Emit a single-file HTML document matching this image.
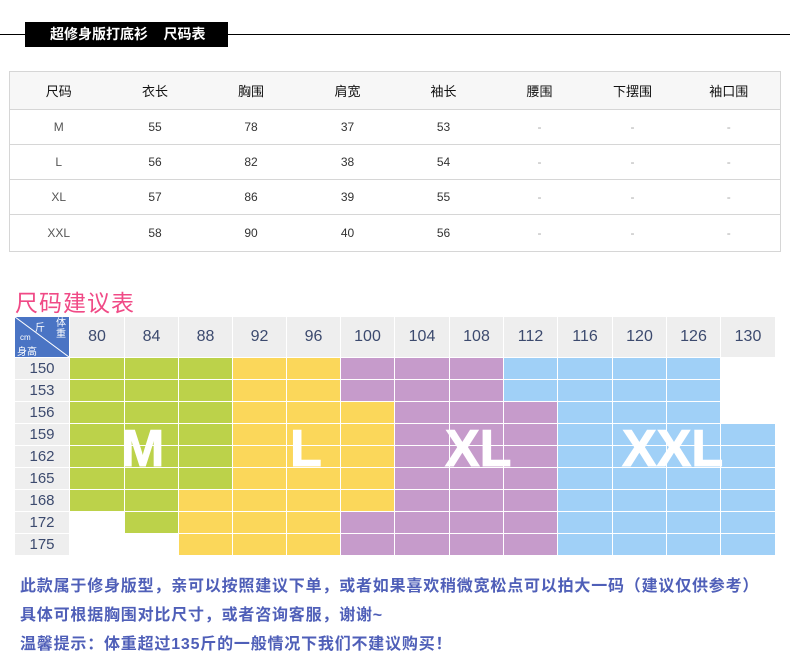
<!DOCTYPE html>
<html><head><meta charset="utf-8"><style>
*{margin:0;padding:0;box-sizing:border-box}
body{width:790px;height:670px;background:#fff;position:relative;overflow:hidden;font-family:"Liberation Sans","Noto Sans CJK SC",sans-serif}
.a{position:absolute}
.t{table-layout:fixed}
.t td{border-bottom:1px solid #d6d6d6;text-align:center;font-size:12px;color:#333}
.t tr:first-child td{font-size:13px;color:#111}
.hd{position:absolute;top:317px;height:40px;background:#eee;color:#3c4a6e;font-size:16px;text-align:center;line-height:40px}
.rl{position:absolute;left:15px;width:54px;height:21px;background:#eee;color:#3c4a6e;font-size:15px;text-align:center;line-height:21px}
.big{position:absolute;color:#fff;font-weight:bold;font-size:52px;font-family:"Liberation Sans",sans-serif;line-height:50px;-webkit-text-stroke:1px #fff}
.n{position:absolute;left:20px;color:#4f5fb8;font-weight:bold;font-size:16px;letter-spacing:0.8px;white-space:nowrap}
</style></head><body>
<div class="a" style="left:0;top:34px;width:790px;height:1px;background:#000"></div>
<div class="a" style="left:25px;top:22px;width:203px;height:25px;background:#000;color:#fff;font-size:14px;line-height:25px;padding-left:25px;font-weight:bold">超修身版打底衫&nbsp;&nbsp;&nbsp;&nbsp;尺码表</div>
<table class="a t" style="left:9px;top:71px;width:771px;border:1px solid #d6d6d6;border-collapse:collapse">
<colgroup><col style="width:98px"><col style="width:95px"><col style="width:97px"><col style="width:96px"><col style="width:96px"><col style="width:96px"><col style="width:90px"><col style="width:103px"></colgroup>
<tr style="height:38px;background:#f7f7f7"><td>尺码</td><td>衣长</td><td>胸围</td><td>肩宽</td><td>袖长</td><td>腰围</td><td>下摆围</td><td>袖口围</td></tr>
<tr style="height:35px"><td style="color:#555">M</td><td>55</td><td>78</td><td>37</td><td>53</td><td style="color:#aaa">-</td><td style="color:#aaa">-</td><td style="color:#aaa">-</td></tr>
<tr style="height:35px"><td style="color:#555">L</td><td>56</td><td>82</td><td>38</td><td>54</td><td style="color:#aaa">-</td><td style="color:#aaa">-</td><td style="color:#aaa">-</td></tr>
<tr style="height:35px"><td style="color:#555">XL</td><td>57</td><td>86</td><td>39</td><td>55</td><td style="color:#aaa">-</td><td style="color:#aaa">-</td><td style="color:#aaa">-</td></tr>
<tr style="height:37px"><td style="color:#555">XXL</td><td>58</td><td>90</td><td>40</td><td>56</td><td style="color:#aaa">-</td><td style="color:#aaa">-</td><td style="color:#aaa">-</td></tr>
</table>
<div class="a" style="left:15px;top:284px;font-size:23px;color:#f04a86;letter-spacing:1px">尺码建议表</div>
<div class="a" style="left:15px;top:317px;width:54px;height:40px;background:#4a74c4;overflow:hidden">
<svg width="54" height="40" style="position:absolute;left:0;top:0"><line x1="0" y1="0" x2="54" y2="40" stroke="#fff" stroke-width="1"/></svg>
<span class="a" style="left:20px;top:2px;color:#fff;font-size:10px">斤</span>
<span class="a" style="left:41px;top:1px;color:#fff;font-size:10px;line-height:11px">体<br>重</span>
<span class="a" style="left:5px;top:16px;color:#fff;font-size:8px">cm</span>
<span class="a" style="left:2px;top:26px;color:#fff;font-size:10px">身高</span>
</div>
<div id="grid"></div>
<script>
var xs=[70,125,179,233,287,341,395,450,504,558,613,667,721,776];
var ws=["80","84","88","92","96","100","104","108","112","116","120","126","130"];
var hs=["150","153","156","159","162","165","168","172","175"];
var C={G:"#bcd24a",Y:"#fbd75a",P:"#c69bcb",B:"#a0d0f7",_:""};
var rows=["GGGYYPPPBBBB_","GGGYYPPPBBBB_","GGGYYYPPPBBB_","GGGYYYPPPBBBB","GGGYYYPPPBBBB","GGGYYYPPPBBBB","GGYYYYPPPBBBB","_GYYYPPPPBBBB","__YYYPPPPBBBB"];
var h="";
for(var i=0;i<13;i++)h+='<div class="hd" style="left:'+xs[i]+'px;width:'+(xs[i+1]-xs[i]-1)+'px">'+ws[i]+'</div>';
for(var r=0;r<9;r++){var y=358+r*22;h+='<div class="rl" style="top:'+y+'px">'+hs[r]+'</div>';
for(var i=0;i<13;i++){var c=C[rows[r][i]];if(c)h+='<div class="a" style="left:'+xs[i]+'px;top:'+y+'px;width:'+(xs[i+1]-xs[i]-1)+'px;height:21px;background:'+c+'"></div>';}}
document.getElementById("grid").innerHTML=h;
</script>
<div class="big" style="left:121px;top:424px">M</div>
<div class="big" style="left:290px;top:424px">L</div>
<div class="big" style="left:445px;top:424px">XL</div>
<div class="big" style="left:622px;top:424px">XXL</div>
<div class="n" style="top:572px">此款属于修身版型，亲可以按照建议下单，或者如果喜欢稍微宽松点可以拍大一码（建议仅供参考）</div>
<div class="n" style="top:601px">具体可根据胸围对比尺寸，或者咨询客服，谢谢~</div>
<div class="n" style="top:630px">温馨提示：体重超过135斤的一般情况下我们不建议购买！</div>
</body></html>
